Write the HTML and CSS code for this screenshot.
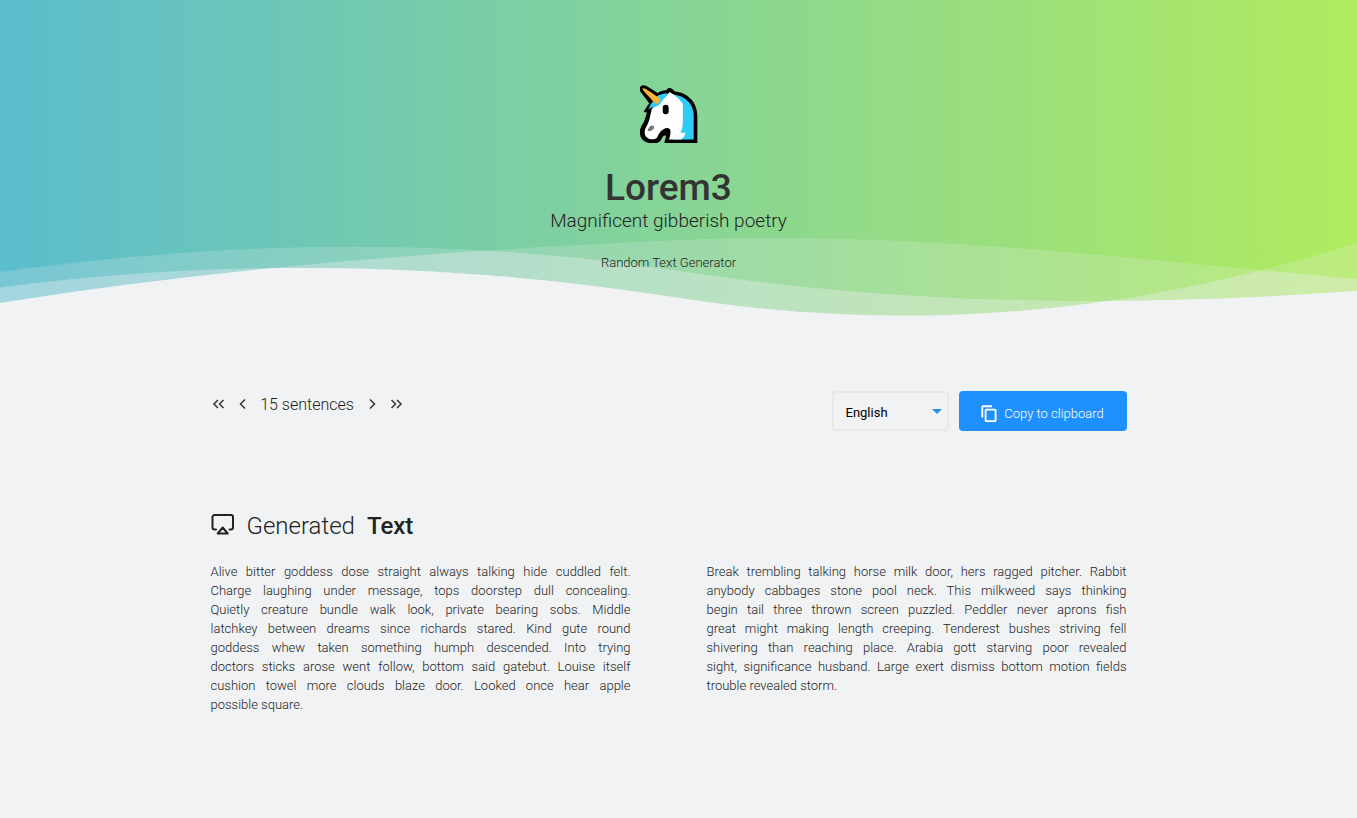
FILE: index.html
```html
<!DOCTYPE html>
<html lang="en">
<head>
<meta charset="utf-8">
<meta name="viewport" content="width=device-width, initial-scale=1">
<title>Lorem3</title>
<link rel="stylesheet" href="styles.css">
</head>
<body>
<header class="hero">
  <svg class="waves" viewBox="0 236 1357 84" preserveAspectRatio="none" aria-hidden="true">
    <defs>
      <path id="wave-a" d="M0 272C226 241 452 236 680 271S1130 307 1357 291V320H0Z"/>
      <path id="wave-b" d="M0 287.500C226 258 452 262 680 298S1130 315 1357 243V320H0Z"/>
      <path id="wave-c" d="M0 303C226 267 452 250 680 240S1130 259 1357 279V320H0Z"/>
      <clipPath id="clip-a"><use href="#wave-a"/></clipPath>
      <clipPath id="clip-b"><use href="#wave-b"/></clipPath>
      <clipPath id="clip-ab" clip-path="url(#clip-a)"><use href="#wave-b"/></clipPath>
    </defs>
    <use class="wave" href="#wave-a"/>
    <use class="wave" href="#wave-b"/>
    <use class="wave" href="#wave-c"/>
    <g clip-path="url(#clip-a)">
      <use class="wave" href="#wave-b"/>
      <use class="wave" href="#wave-c"/>
    </g>
    <g clip-path="url(#clip-b)"><use class="wave" href="#wave-c"/></g>
    <g clip-path="url(#clip-ab)"><use class="ground" href="#wave-c"/></g>
  </svg>
  <div class="brand">
    <svg class="logo" viewBox="29 28 176 176" role="img" aria-label="Unicorn">
      <path fill="#000" d="M37 29C44 27 50 31 55 35L83 52C91 45 103 43 109 44C112 38 116 36 121 37C128 40 132 44 135 48C169 50 203 77 203 122V204H103C104 195 107 190 108 182C101 178 97 186 93 194C88 203 78 206 65 205C45 204 32 194 29 178C26 164 33 151 41 140L50 112L40 109L52 90L57 83L31 49C25 41 27 32 37 29Z"/>
      <path fill="#2fcbf7" d="M125 57C161 57 192 83 192 122V193H130Z"/>
      <path fill="#fff" d="M78 88C87 79 108 62 119 49C134 59 150 70 159 85V140Q159 160 152 173H168Q164 187 154 193H117C122 180 122 171 121 164C111 150 91 164 82 185C77 195 60 195 50 187C39 177 43 161 51 149C59 135 60 118 65 100Z"/>
      <path fill="#2fcbf7" d="M80 63C88 56 100 54 113 53C110 63 104 68 98 73C92 86 84 94 73 95C67 96 60 97 54 104L62 86L72 74Z"/>
      <path fill="#fbb63a" d="M37 38C44 36 56 46 87 67C92 72 91 80 84 83C77 87 70 79 65 73C53 58 34 43 37 38Z"/>
      <path fill="#f2aa34" d="M38 41L62 62L84 83C77 87 70 79 65 73C54 59 41 47 38 41Z"/>
      <rect x="98" y="88" width="18" height="29" rx="9"/>
      <path fill="#777" d="M54 161C61 148 67 149 72 154C73 163 63 169 52 168Z"/>
    </svg>
    <h1 class="title">Lorem3</h1>
    <p class="tagline">Magnificent gibberish poetry</p>
    <p class="kind">Random Text Generator</p>
  </div>
</header>
<main class="content">
  <div class="toolbar">
    <div class="stepper">
      <button class="step" type="button" aria-label="Much fewer"><svg viewBox="0 0 16 16"><path d="M7 3L3 7l4 4M12.500 3l-4 4 4 4"/></svg></button>
      <button class="step" type="button" aria-label="Fewer"><svg viewBox="0 0 16 16"><path d="M10 2.500L5.500 7l4.500 4.500"/></svg></button>
      <span class="count">15 sentences</span>
      <button class="step" type="button" aria-label="More"><svg viewBox="0 0 16 16"><path d="M6 2.500L10.500 7 6 11.500"/></svg></button>
      <button class="step" type="button" aria-label="Many more"><svg viewBox="0 0 16 16"><path d="M3.500 3l4 4-4 4M9 3l4 4-4 4"/></svg></button>
    </div>
    <div class="actions">
      <div class="picker">
        <select class="language" aria-label="Language"><option>English</option></select>
      </div>
      <button class="copy" type="button">
        <svg viewBox="1 0 23 23" aria-hidden="true"><path d="M16 .500H4C2.600.500 1.500 1.600 1.500 3v14h2.500V3h12V.500zM19.500 5H8.500C7 5 6 6 6 7.500v13C6 22 7 23 8.500 23h11c1.500 0 2.500-1 2.500-2.500v-13C22 6 21 5 19.500 5zm0 15.500h-11v-13h11v13z"/></svg>
        <span>Copy to clipboard</span>
      </button>
    </div>
  </div>
  <h2 class="heading">
    <svg viewBox="0 0 24 24" aria-hidden="true"><path d="M5 15.500H3.500a2 2 0 0 1-2-2V3a2 2 0 0 1 2-2h16.500a2 2 0 0 1 2 2v10.500a2 2 0 0 1-2 2H18.500"/><path d="M11.700 13.500l5 6h-10z"/></svg>
    <span>Generated</span>
    <strong>Text</strong>
  </h2>
  <div class="columns">
    <p class="verse">
      <span>Alive bitter goddess dose straight always talking hide cuddled felt.</span>
      <span>Charge laughing under message, tops doorstep dull concealing.</span>
      <span>Quietly creature bundle walk look, private bearing sobs. Middle</span>
      <span>latchkey between dreams since richards stared. Kind gute round</span>
      <span>goddess whew taken something humph descended. Into trying</span>
      <span>doctors sticks arose went follow, bottom said gatebut. Louise itself</span>
      <span>cushion towel more clouds blaze door. Looked once hear apple</span>
      <span>possible square.</span>
    </p>
    <p class="verse">
      <span>Break trembling talking horse milk door, hers ragged pitcher. Rabbit</span>
      <span>anybody cabbages stone pool neck. This milkweed says thinking</span>
      <span>begin tail three thrown screen puzzled. Peddler never aprons fish</span>
      <span>great might making length creeping. Tenderest bushes striving fell</span>
      <span>shivering than reaching place. Arabia gott starving poor revealed</span>
      <span>sight, significance husband. Large exert dismiss bottom motion fields</span>
      <span>trouble revealed storm.</span>
    </p>
  </div>
</main>
</body>
</html>
```
FILE: styles.css
```css
* { box-sizing: border-box; }

body {
  margin: 0;
  background: #f0f2f4;
  color: #222;
  font-family: Roboto, "Liberation Sans", sans-serif;
  font-size: 13px;
  font-weight: 300;
}

h1, h2, p { margin: 0; }
button, select { font: inherit; }

.hero {
  position: relative;
  min-height: 320px;
  padding: 85px 20px 48px 0;
  background: linear-gradient(90deg, #5bbdce, #b1eb5f);
}

.waves {
  position: absolute;
  left: 0;
  bottom: 0;
  width: 100%;
  height: 84px;
}

.wave { fill: #f0f2f4; fill-opacity: .2; }
.ground { fill: #f0f2f4; }

.brand {
  position: relative;
  display: flex;
  flex-direction: column;
  align-items: center;
}

.logo { width: 58px; height: 58px; }

.title {
  margin-top: 25px;
  color: #333;
  font-size: 37px;
  font-weight: 500;
  line-height: 40px;
}

.tagline { font-size: 19px; line-height: 26px; }
.kind { margin-top: 19px; line-height: 19px; }

.content {
  max-width: 936px;
  margin: 0 auto;
  padding: 71px 20px 40px 0;
}

.toolbar {
  display: flex;
  justify-content: space-between;
  align-items: flex-start;
}

.stepper {
  display: flex;
  align-items: center;
  gap: 8px;
  padding-top: 2px;
}

.step {
  display: flex;
  padding: 0;
  border: 0;
  background: none;
  color: #333;
}

.step svg {
  width: 16px;
  height: 16px;
  fill: none;
  stroke: currentColor;
  stroke-width: 1.5;
}

.count {
  min-width: 97px;
  font-size: 16px;
  line-height: 24px;
  text-align: center;
}

.actions { display: flex; gap: 10px; }

.picker { position: relative; }

.picker::after {
  content: "";
  position: absolute;
  right: 7px;
  top: 18px;
  border: 5px solid transparent;
  border-top-color: #2e8fe0;
  border-bottom: 0;
  pointer-events: none;
}

.language {
  appearance: none;
  width: 117px;
  height: 40px;
  padding: 2px 12px 0;
  border: 2px solid #e6e8ea;
  border-radius: 4px;
  background: transparent;
  color: #000;
  font-weight: 400;
}

.copy {
  display: flex;
  align-items: center;
  justify-content: center;
  gap: 6px;
  width: 168px;
  height: 40px;
  padding: 4px 0 0;
  border: 0;
  border-radius: 4px;
  background: #1e90ff;
  color: #fff;
}

.copy svg { width: 17px; height: 17px; fill: currentColor; }

.heading {
  display: flex;
  align-items: center;
  gap: 12px;
  margin-top: 80px;
  font-size: 24px;
  font-weight: 300;
  line-height: 30px;
}

.heading svg {
  width: 24px;
  height: 24px;
  fill: none;
  stroke: currentColor;
  stroke-width: 2;
  stroke-linecap: round;
  stroke-linejoin: round;
}

.heading strong { font-weight: 500; }

.columns {
  display: grid;
  grid-template-columns: 1fr 1fr;
  gap: 76px;
  margin-top: 21px;
}

.verse { line-height: 19px; }

.verse span { display: block; text-align-last: justify; }
.verse span:last-child { text-align-last: left; }
```
